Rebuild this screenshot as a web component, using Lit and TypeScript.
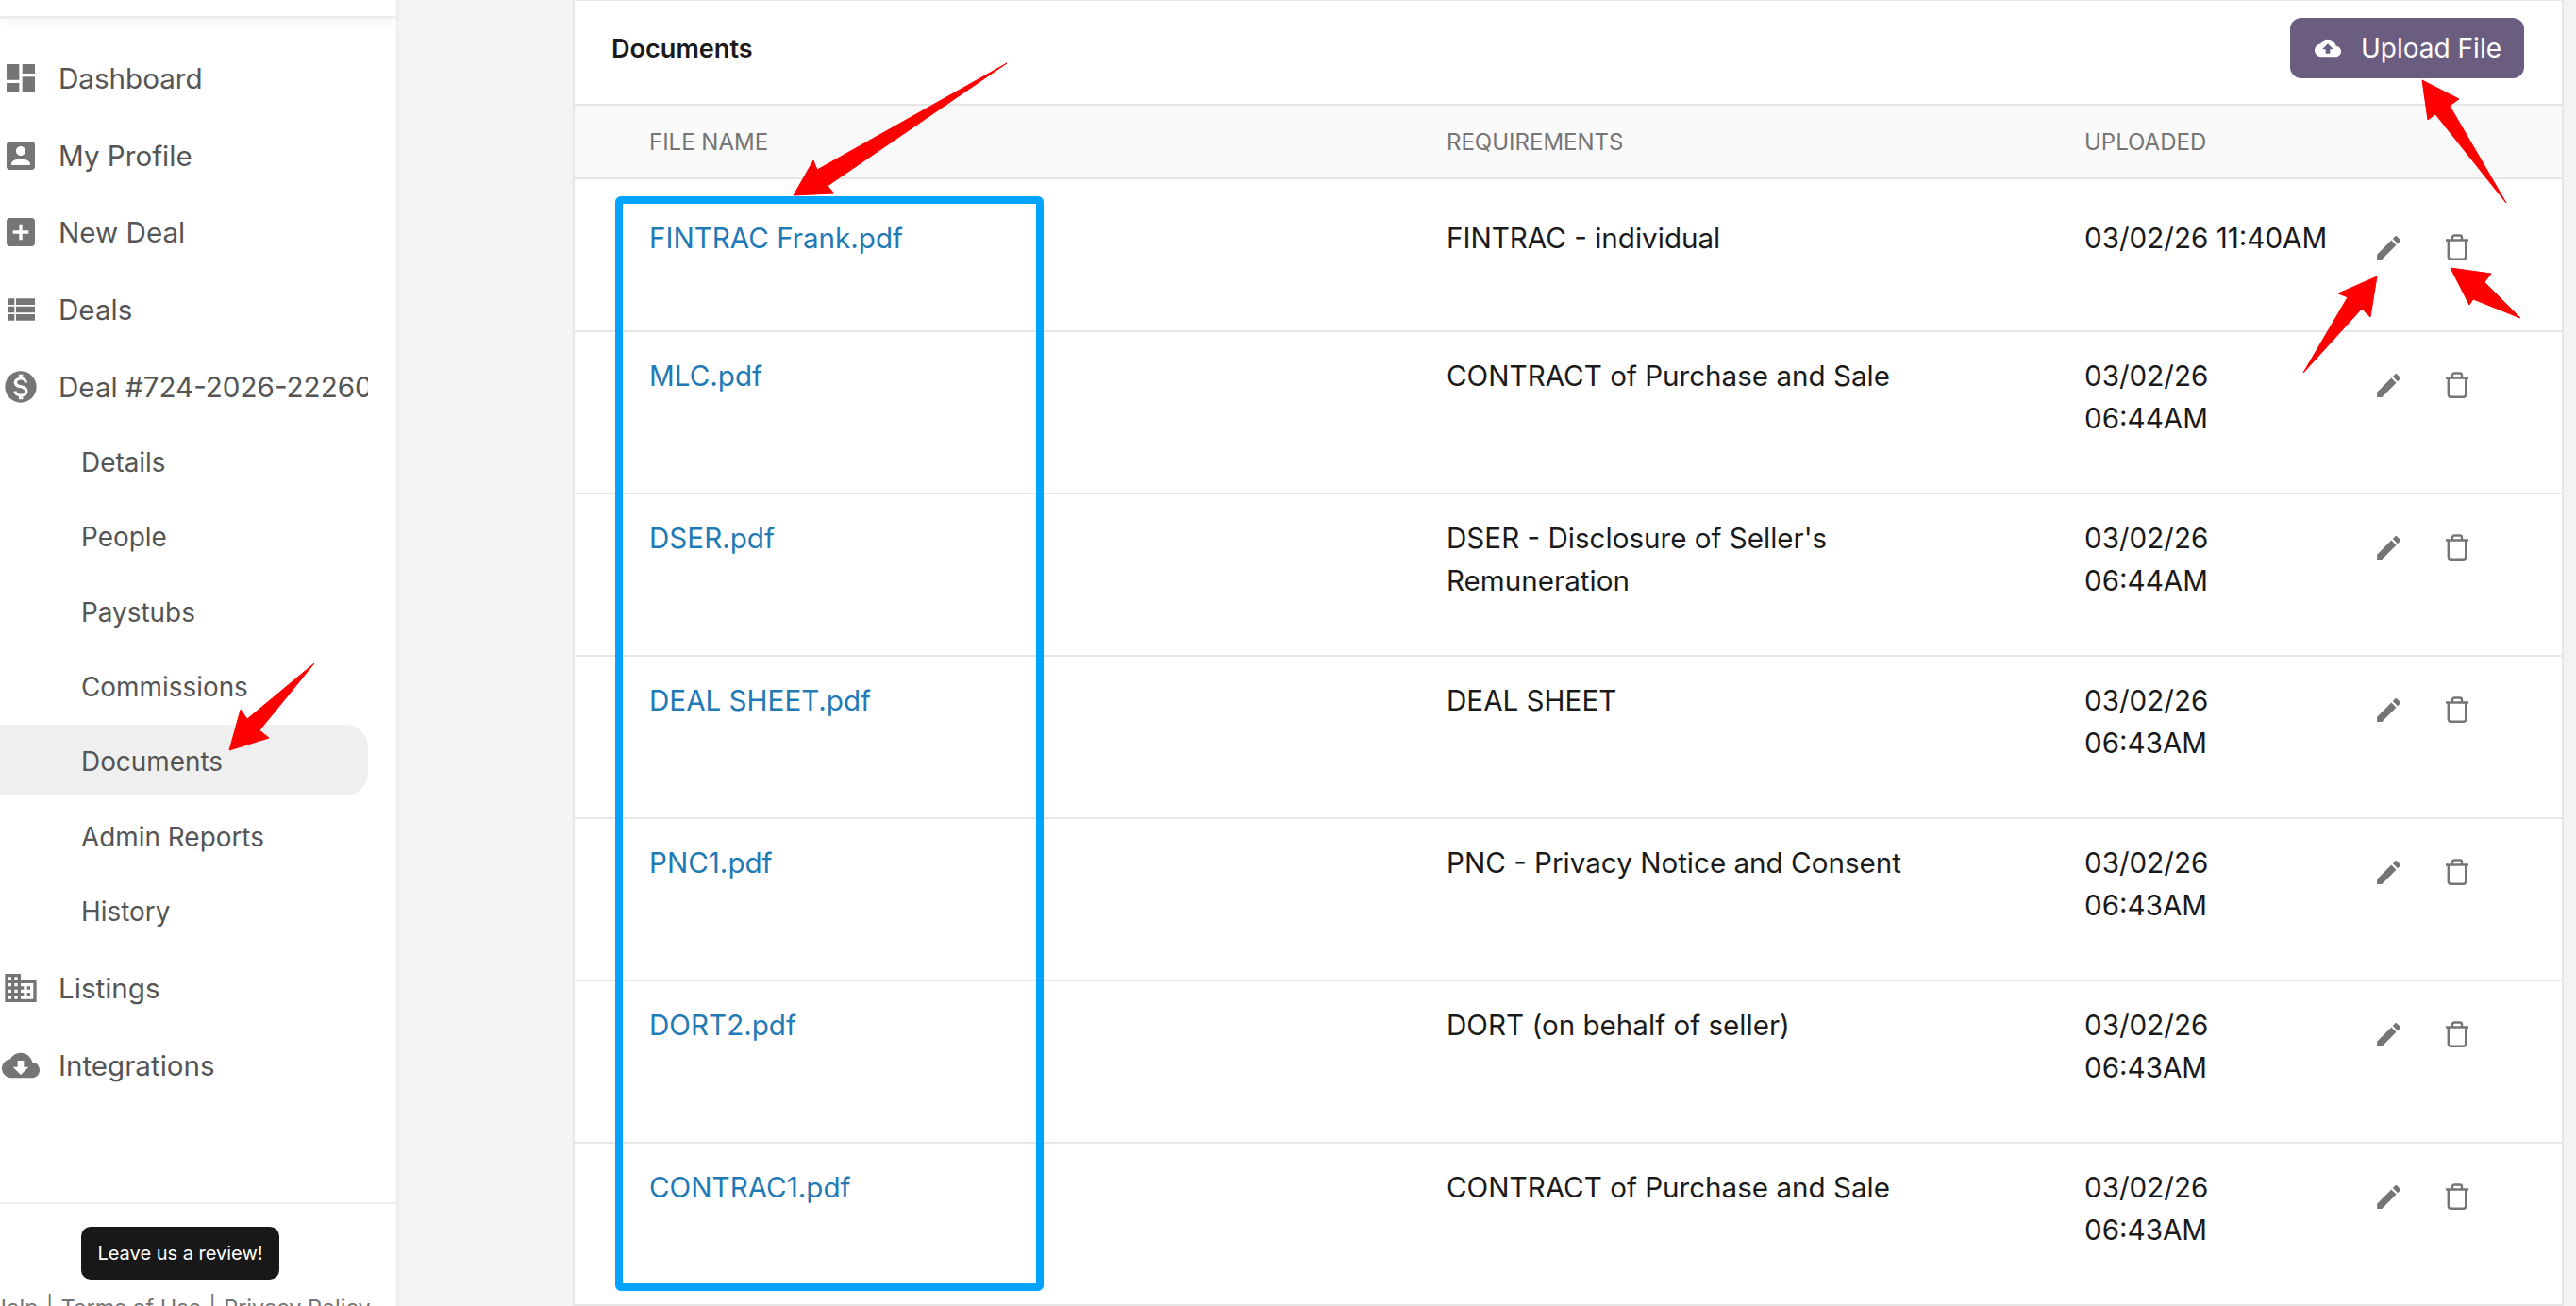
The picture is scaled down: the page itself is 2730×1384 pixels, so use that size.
import { LitElement, html, css, svg } from "lit";
import { customElement } from "lit/decorators.js";

const P = {
  dashboard: "M3 13h8V3H3v10zm0 8h8v-6H3v6zm10 0h8V11h-8v10zm0-18v6h8V3h-8z",
  profile: "M3 5v14c0 1.1.89 2 2 2h14c1.1 0 2-.9 2-2V5c0-1.1-.9-2-2-2H5c-1.11 0-2 .9-2 2zm12 4c0 1.66-1.34 3-3 3s-3-1.34-3-3 1.34-3 3-3 3 1.34 3 3zm-9 8c0-2 4-3.1 6-3.1s6 1.1 6 3.1v1H6v-1z",
  add: "M19 3H5c-1.11 0-2 .9-2 2v14c0 1.1.89 2 2 2h14c1.1 0 2-.9 2-2V5c0-1.1-.9-2-2-2zm-2 10h-4v4h-2v-4H7v-2h4V7h2v4h4v2z",
  list: "M4 14h4v-4H4v4zm0 5h4v-4H4v4zM4 9h4V5H4v4zm5 5h12v-4H9v4zm0 5h12v-4H9v4zM9 5v4h12V5H9z",
  money: "M12 2C6.48 2 2 6.48 2 12s4.48 10 10 10 10-4.48 10-10S17.52 2 12 2zm1.41 16.09V20h-2.67v-1.93c-1.71-.36-3.16-1.46-3.27-3.4h1.96c.1 1.05.82 1.87 2.65 1.87 1.96 0 2.4-.98 2.4-1.59 0-.83-.44-1.61-2.67-2.14-2.48-.6-4.18-1.62-4.18-3.67 0-1.72 1.39-2.84 3.11-3.21V4h2.67v1.95c1.86.45 2.79 1.86 2.85 3.39H14.3c-.05-1.11-.64-1.87-2.22-1.87-1.5 0-2.4.68-2.4 1.64 0 .84.65 1.39 2.67 1.91s4.18 1.39 4.18 3.91c-.01 1.83-1.38 2.83-3.12 3.16z",
  domain: "M12 7V3H2v18h20V7H12zM6 19H4v-2h2v2zm0-4H4v-2h2v2zm0-4H4V9h2v2zm0-4H4V5h2v2zm4 12H8v-2h2v2zm0-4H8v-2h2v2zm0-4H8V9h2v2zm0-4H8V5h2v2zm10 12h-8v-2h2v-2h-2v-2h2v-2h-2V9h8v10zm-2-8h-2v2h2v-2zm0 4h-2v2h2v-2z",
  cloudDown: "M19.35 10.04C18.67 6.59 15.64 4 12 4 9.11 4 6.6 5.64 5.35 8.04 2.34 8.36 0 10.91 0 14c0 3.31 2.69 6 6 6h13c2.76 0 5-2.24 5-5 0-2.64-2.05-4.78-4.65-4.96zM17 13l-5 5-5-5h3V9h4v4h3z",
  cloudUp: "M19.35 10.04C18.67 6.59 15.64 4 12 4 9.11 4 6.6 5.64 5.35 8.04 2.34 8.36 0 10.91 0 14c0 3.31 2.69 6 6 6h13c2.76 0 5-2.24 5-5 0-2.64-2.05-4.78-4.65-4.96zM14 13v4h-4v-4H7l5-5 5 5h-3z",
  edit: "M3 17.25V21h3.75L17.81 9.94l-3.75-3.75L3 17.25zM20.71 7.04c.39-.39.39-1.02 0-1.41l-2.34-2.34c-.39-.39-1.02-.39-1.41 0l-1.83 1.83 3.75 3.75 1.83-1.83z",
};

const icon = (d: string, cls: string) => html`<svg class=${cls} viewBox="0 0 24 24"><path d=${d}></path></svg>`;

const TOP = [
  [P.dashboard, "Dashboard"],
  [P.profile, "My Profile"],
  [P.add, "New Deal"],
  [P.list, "Deals"],
  [P.money, "Deal #724-2026-22260"],
];
const SUB = ["Details", "People", "Paystubs", "Commissions", "Documents", "Admin Reports", "History"];
const BOTTOM = [
  [P.domain, "Listings"],
  [P.cloudDown, "Integrations"],
];

const ROWS = [
  { file: "FINTRAC Frank.pdf", req: "FINTRAC - individual", date: "03/02/26 11:40AM", time: "" },
  { file: "MLC.pdf", req: "CONTRACT of Purchase and Sale", date: "03/02/26", time: "06:44AM" },
  { file: "DSER.pdf", req: "DSER - Disclosure of Seller's Remuneration", date: "03/02/26", time: "06:44AM" },
  { file: "DEAL SHEET.pdf", req: "DEAL SHEET", date: "03/02/26", time: "06:43AM" },
  { file: "PNC1.pdf", req: "PNC - Privacy Notice and Consent", date: "03/02/26", time: "06:43AM" },
  { file: "DORT2.pdf", req: "DORT (on behalf of seller)", date: "03/02/26", time: "06:43AM" },
  { file: "CONTRAC1.pdf", req: "CONTRACT of Purchase and Sale", date: "03/02/26", time: "06:43AM" },
];

const ARROWS = [
  "1067,67 866,180 862,170 841,207 884,205 877,197",
  "333,703 262,762 255,752 243,795 285,782 275,774",
  "2656,215 2596,112 2606,105 2567,85 2573,127 2581,121",
  "2441,395 2488,315 2478,311 2519,293 2512,336 2503,327",
  "2671,337 2633,299 2640,290 2597,284 2617,323 2621,317",
];

@customElement("app-root")
export class AppRoot extends LitElement {
  static styles = css`
    :host {
      display: flex;
      position: relative;
      width: 2730px;
      height: 1384px;
      overflow: hidden;
      background: #f3f3f3;
      font-family: Inter, "Liberation Sans", sans-serif;
      color: #1a1a1a;
    }
    .sidebar {
      flex: none;
      width: 420px;
      height: 1384px;
      background: #fff;
      border-right: 2px solid #eeeeee;
      display: flex;
      flex-direction: column;
    }
    .topbar {
      flex: none;
      height: 17px;
      border-bottom: 3px solid #eeeeee;
      box-shadow: 0 8px 14px -4px rgba(0, 0, 0, 0.05);
    }
    .nav {
      flex: 1;
      padding-top: 22px;
      color: #555555;
      font-size: 29.6px;
    }
    .item {
      height: 81.7px;
      display: flex;
      align-items: center;
    }
    .nav-icon {
      flex: none;
      width: 40px;
      height: 40px;
      margin: 0 20px 0 2px;
      fill: #757575;
    }
    .label {
      width: 328px;
      overflow: hidden;
      white-space: nowrap;
    }
    .sub {
      height: 79.3px;
      display: flex;
      align-items: center;
      font-size: 27.9px;
    }
    .sub.last {
      margin-bottom: 0.8px;
    }
    .pill {
      width: 390px;
      height: 75px;
      box-sizing: border-box;
      padding-left: 86px;
      display: flex;
      align-items: center;
      border-radius: 0 24px 24px 0;
    }
    .pill.active {
      background: #efefef;
      margin-bottom: 3px;
      padding-top: 3px;
    }
    .foot {
      flex: none;
      height: 110px;
      box-sizing: border-box;
      border-top: 2px solid #eeeeee;
      padding: 23.5px 38px 0 0;
      display: flex;
      flex-direction: column;
      align-items: center;
    }
    .review {
      flex: none;
      width: 210px;
      height: 56px;
      box-sizing: border-box;
      display: flex;
      align-items: center;
      justify-content: center;
      border-radius: 10px;
      background: #181818;
      color: #fff;
      font-size: 20px;
    }
    .links {
      flex: none;
      margin-top: 15.5px;
      white-space: nowrap;
      font-size: 23.5px;
      color: #757575;
      display: flex;
      gap: 8px;
    }
    .main {
      flex: none;
      width: 2110px;
      margin-left: 185px;
      height: 1384px;
      box-sizing: border-box;
      background: #fff;
      border: 2px solid #e6e6e6;
      border-top-width: 1px;
      display: flex;
      flex-direction: column;
    }
    .title {
      flex: none;
      height: 109px;
      box-sizing: border-box;
      padding: 0 39px 9px;
      display: flex;
      align-items: center;
      justify-content: space-between;
    }
    .title h1 {
      margin: 0;
      font-size: 27.1px;
      font-weight: 600;
    }
    .upload {
      width: 248px;
      height: 64px;
      margin-right: 1px;
      box-sizing: border-box;
      border-radius: 12px;
      background: #6a5d7f;
      color: #fff;
      display: flex;
      align-items: center;
      padding-left: 26px;
      gap: 21px;
      font-size: 28px;
    }
    .upload svg {
      width: 28px;
      height: 28px;
      fill: #fff;
    }
    .grid {
      display: grid;
      grid-template-columns: 924px 676px 286px 1fr;
    }
    .head {
      flex: none;
      height: 80px;
      box-sizing: border-box;
      align-items: center;
      background: #fafafa;
      border-top: 2px solid #e6e6e6;
      border-bottom: 2px solid #e6e6e6;
      font-size: 24px;
      color: #757575;
    }
    .head > div:first-child,
    .row > div:first-child {
      padding-left: 79px;
    }
    .row {
      height: 172px;
      box-sizing: border-box;
      padding-top: 24px;
      border-bottom: 2px solid #e6e6e6;
      font-size: 29.6px;
      line-height: 45px;
    }
    .row.first {
      height: 162px;
      padding-top: 40px;
    }
    .row.last {
      border-bottom: none;
      flex: 1;
    }
    .row a {
      color: #1f7ab5;
      text-decoration: none;
    }
    .req {
      padding-right: 120px;
    }
    .date {
      white-space: nowrap;
    }
    .actions {
      display: flex;
      align-items: center;
      height: 33px;
      margin-top: 15.5px;
    }
    .row .edit {
      width: 33px;
      height: 33px;
      margin-left: 20px;
      fill: #757575;
    }
    .row .trash {
      width: 26px;
      height: 28px;
      margin-left: 43px;
      fill: none;
      stroke: #757575;
      stroke-width: 2.4;
    }
    .overlay {
      position: absolute;
      left: 0;
      top: 0;
      width: 2730px;
      height: 1384px;
      pointer-events: none;
    }
    .box {
      fill: none;
      stroke: #00a3ff;
      stroke-width: 8;
    }
    .arrow {
      fill: #ff0000;
      stroke: #ff0000;
      stroke-width: 1;
      stroke-linejoin: round;
    }
  `;

  render() {
    return html`
      <aside class="sidebar">
        <div class="topbar"></div>
        <nav class="nav">
          ${TOP.map(([d, t]) => html`<div class="item">${icon(d, "nav-icon")}<div class="label">${t}</div></div>`)}
          ${SUB.map(
            (t, i) => html`<div class="sub ${i === SUB.length - 1 ? "last" : ""}"><div class="pill ${t === "Documents" ? "active" : ""}">${t}</div></div>`
          )}
          ${BOTTOM.map(([d, t]) => html`<div class="item">${icon(d, "nav-icon")}<div class="label">${t}</div></div>`)}
        </nav>
        <div class="foot">
          <div class="review">Leave us a review!</div>
          <div class="links"><span>Help</span><span>|</span><span>Terms of Use</span><span>|</span><span>Privacy Policy</span></div>
        </div>
      </aside>
      <main class="main">
        <div class="title">
          <h1>Documents</h1>
          <div class="upload">${icon(P.cloudUp, "")}<span>Upload File</span></div>
        </div>
        <div class="grid head">
          <div>FILE NAME</div>
          <div>REQUIREMENTS</div>
          <div>UPLOADED</div>
          <div></div>
        </div>
        ${ROWS.map(
          (r, i) => html`
            <div class="grid row ${i === 0 ? "first" : ""} ${i === ROWS.length - 1 ? "last" : ""}">
              <div><a>${r.file}</a></div>
              <div class="req">${r.req}</div>
              <div class="date">${r.date}${r.time ? html`<br />${r.time}` : ""}</div>
              <div class="actions">
                ${icon(P.edit, "edit")}
                <svg class="trash" viewBox="0 0 26 28">
                  <path d="M1 6.5H25M8 6V3.5A2 2 0 0 1 10 1.5H16A2 2 0 0 1 18 3.5V6M3.8 7V24A2.8 2.8 0 0 0 6.6 26.8H19.4A2.8 2.8 0 0 0 22.2 24V7"></path>
                </svg>
              </div>
            </div>
          `
        )}
      </main>
      <svg class="overlay" viewBox="0 0 2730 1384">
        ${svg`<rect class="box" x="656" y="212" width="446" height="1152" rx="2"></rect>`}
        ${ARROWS.map((p) => svg`<polygon class="arrow" points=${p}></polygon>`)}
      </svg>
    `;
  }
}
